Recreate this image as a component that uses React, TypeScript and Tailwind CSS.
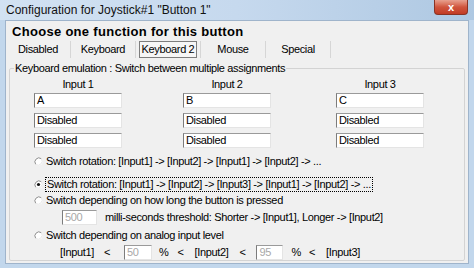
import React from 'react';

const font = { fontFamily: '"Liberation Sans", Arial, sans-serif' };

const Radio = ({ checked = false }: { checked?: boolean }) => (
  <svg width="9" height="9" viewBox="0 0 9 9" className="shrink-0">
    <circle cx="4.5" cy="4.5" r="4" fill="#fff" />
    <path d="M7.3 1.7 A4 4 0 0 0 1.7 7.3" fill="none" stroke="#8a8a8a" strokeWidth="1" />
    <path d="M1.7 7.3 A4 4 0 0 0 7.3 1.7" fill="none" stroke="#e8e8e8" strokeWidth="1" />
    {checked && <circle cx="4.5" cy="4.5" r="1.6" fill="#111" />}
  </svg>
);

const Box = ({ value, w = 'w-[88px]', disabled = false }: { value: string; w?: string; disabled?: boolean }) => (
  <div
    className={`${w} h-[15px] shrink-0 bg-white border-t border-l border-t-[#9a9a9a] border-l-[#7c7c7c] border-r border-b border-r-[#e4e4e4] border-b-[#e4e4e4] pl-[2px] leading-[13px] ${
      disabled ? 'text-[#a8a8a8]' : 'text-black'
    }`}
  >
    {value}
  </div>
);

const tabs = ['Disabled', 'Keyboard', 'Keyboard 2', 'Mouse', 'Special'];

export default function App() {
  return (
    <div className="w-[474px] h-[268px] relative overflow-hidden bg-[#c2d7ec] flex flex-col" style={font}>
      {/* title bar */}
      <div className="h-[20px] shrink-0 flex items-center pl-[6px] bg-gradient-to-r from-[#d2e2f2] via-[#c6d9ee] to-[#aec8e2] text-[12px] text-[#111]">
        Configuration for Joystick#1 "Button 1"
      </div>
      <div className="absolute top-0 right-[6px] w-[34px] h-[15px] rounded-b-[4px] border border-t-0 border-[#8a3324] bg-gradient-to-b from-[#e7a08f] via-[#d0553e] to-[#c13b24] flex items-center justify-center text-white text-[11px] font-bold leading-none">
        x
      </div>

      {/* client area */}
      <div className="flex-1 mx-[5px] mb-[6px] bg-[#f0f0f0] border border-[#9fb4cb] flex flex-col text-[11px] tracking-[-0.35px] text-black whitespace-nowrap">
        <div className="h-[20px] pl-[6px] pt-[3px] font-bold text-[13px] leading-[16px] tracking-[0.3px]">
          Choose one function for this button
        </div>

        <div className="flex h-[17px] items-stretch">
          {tabs.map((t) => (
            <div key={t} className="w-[65px] flex items-center justify-center border-r border-[#d6d6d6]">
              {t === 'Keyboard 2' ? (
                <div className="h-[17px] w-[58px] border border-[#7d7d7d] bg-[#f6f6f6] flex items-center justify-center">{t}</div>
              ) : (
                t
              )}
            </div>
          ))}
        </div>

        <fieldset className="mx-[3px] mt-[3px] mb-[2px] flex-1 border border-[#d3d3d3] rounded-[2px] px-0">
          <legend className="ml-[4px] px-[1px] leading-[14px]">Keyboard emulation : Switch between multiple assignments</legend>

          <div className="flex mt-[3px] pl-[24px]">
            {[
              ['Input 1', 'A', 'ml-0'],
              ['Input 2', 'B', 'ml-[61px]'],
              ['Input 3', 'C', 'ml-[65px]'],
            ].map(([label, key, ml]) => (
              <div key={label} className={`flex flex-col gap-[5px] ${ml}`}>
                <div className="text-center leading-[13px] h-[13px] -mb-[3px]">{label}</div>
                <Box value={key} />
                <Box value="Disabled" />
                <Box value="Disabled" />
              </div>
            ))}
          </div>

          <div className="flex flex-col pl-[24px] mt-[5px]">
            <div className="flex items-center gap-[3px] h-[16px]">
              <Radio />
              <span>Switch rotation: [Input1] -&gt; [Input2] -&gt; [Input1] -&gt; [Input2] -&gt; ...</span>
            </div>
            <div className="flex items-center gap-[2px] h-[16px] mt-[7px]">
              <Radio checked />
              <span className="border border-dotted border-black px-[1px] leading-[13px]">
                Switch rotation: [Input1] -&gt; [Input2] -&gt; [Input3] -&gt; [Input1] -&gt; [Input2] -&gt; ...
              </span>
            </div>
            <div className="flex items-center gap-[3px] h-[16px]">
              <Radio />
              <span>Switch depending on how long the button is pressed</span>
            </div>
            <div className="flex items-center h-[16px] mt-[1px] pl-[28px]">
              <Box value="500" w="w-[35px]" disabled />
              <span className="ml-[8px]">milli-seconds threshold: Shorter -&gt; [Input1], Longer -&gt; [Input2]</span>
            </div>
            <div className="flex items-center gap-[3px] h-[16px] mt-[2px]">
              <Radio />
              <span>Switch depending on analog input level</span>
            </div>
            <div className="flex items-center h-[16px] mt-[1px] pl-[26px]">
              <span>[Input1]</span>
              <span className="ml-[10px]">&lt;</span>
              <div className="ml-[14px]">
                <Box value="50" w="w-[28px]" disabled />
              </div>
              <span className="ml-[7px]">%</span>
              <span className="ml-[9px]">&lt;</span>
              <span className="ml-[11px]">[Input2]</span>
              <span className="ml-[11px]">&lt;</span>
              <div className="ml-[11px]">
                <Box value="95" w="w-[27px]" disabled />
              </div>
              <span className="ml-[8px]">%</span>
              <span className="ml-[8px]">&lt;</span>
              <span className="ml-[11px]">[Input3]</span>
            </div>
          </div>
        </fieldset>
      </div>
    </div>
  );
}
